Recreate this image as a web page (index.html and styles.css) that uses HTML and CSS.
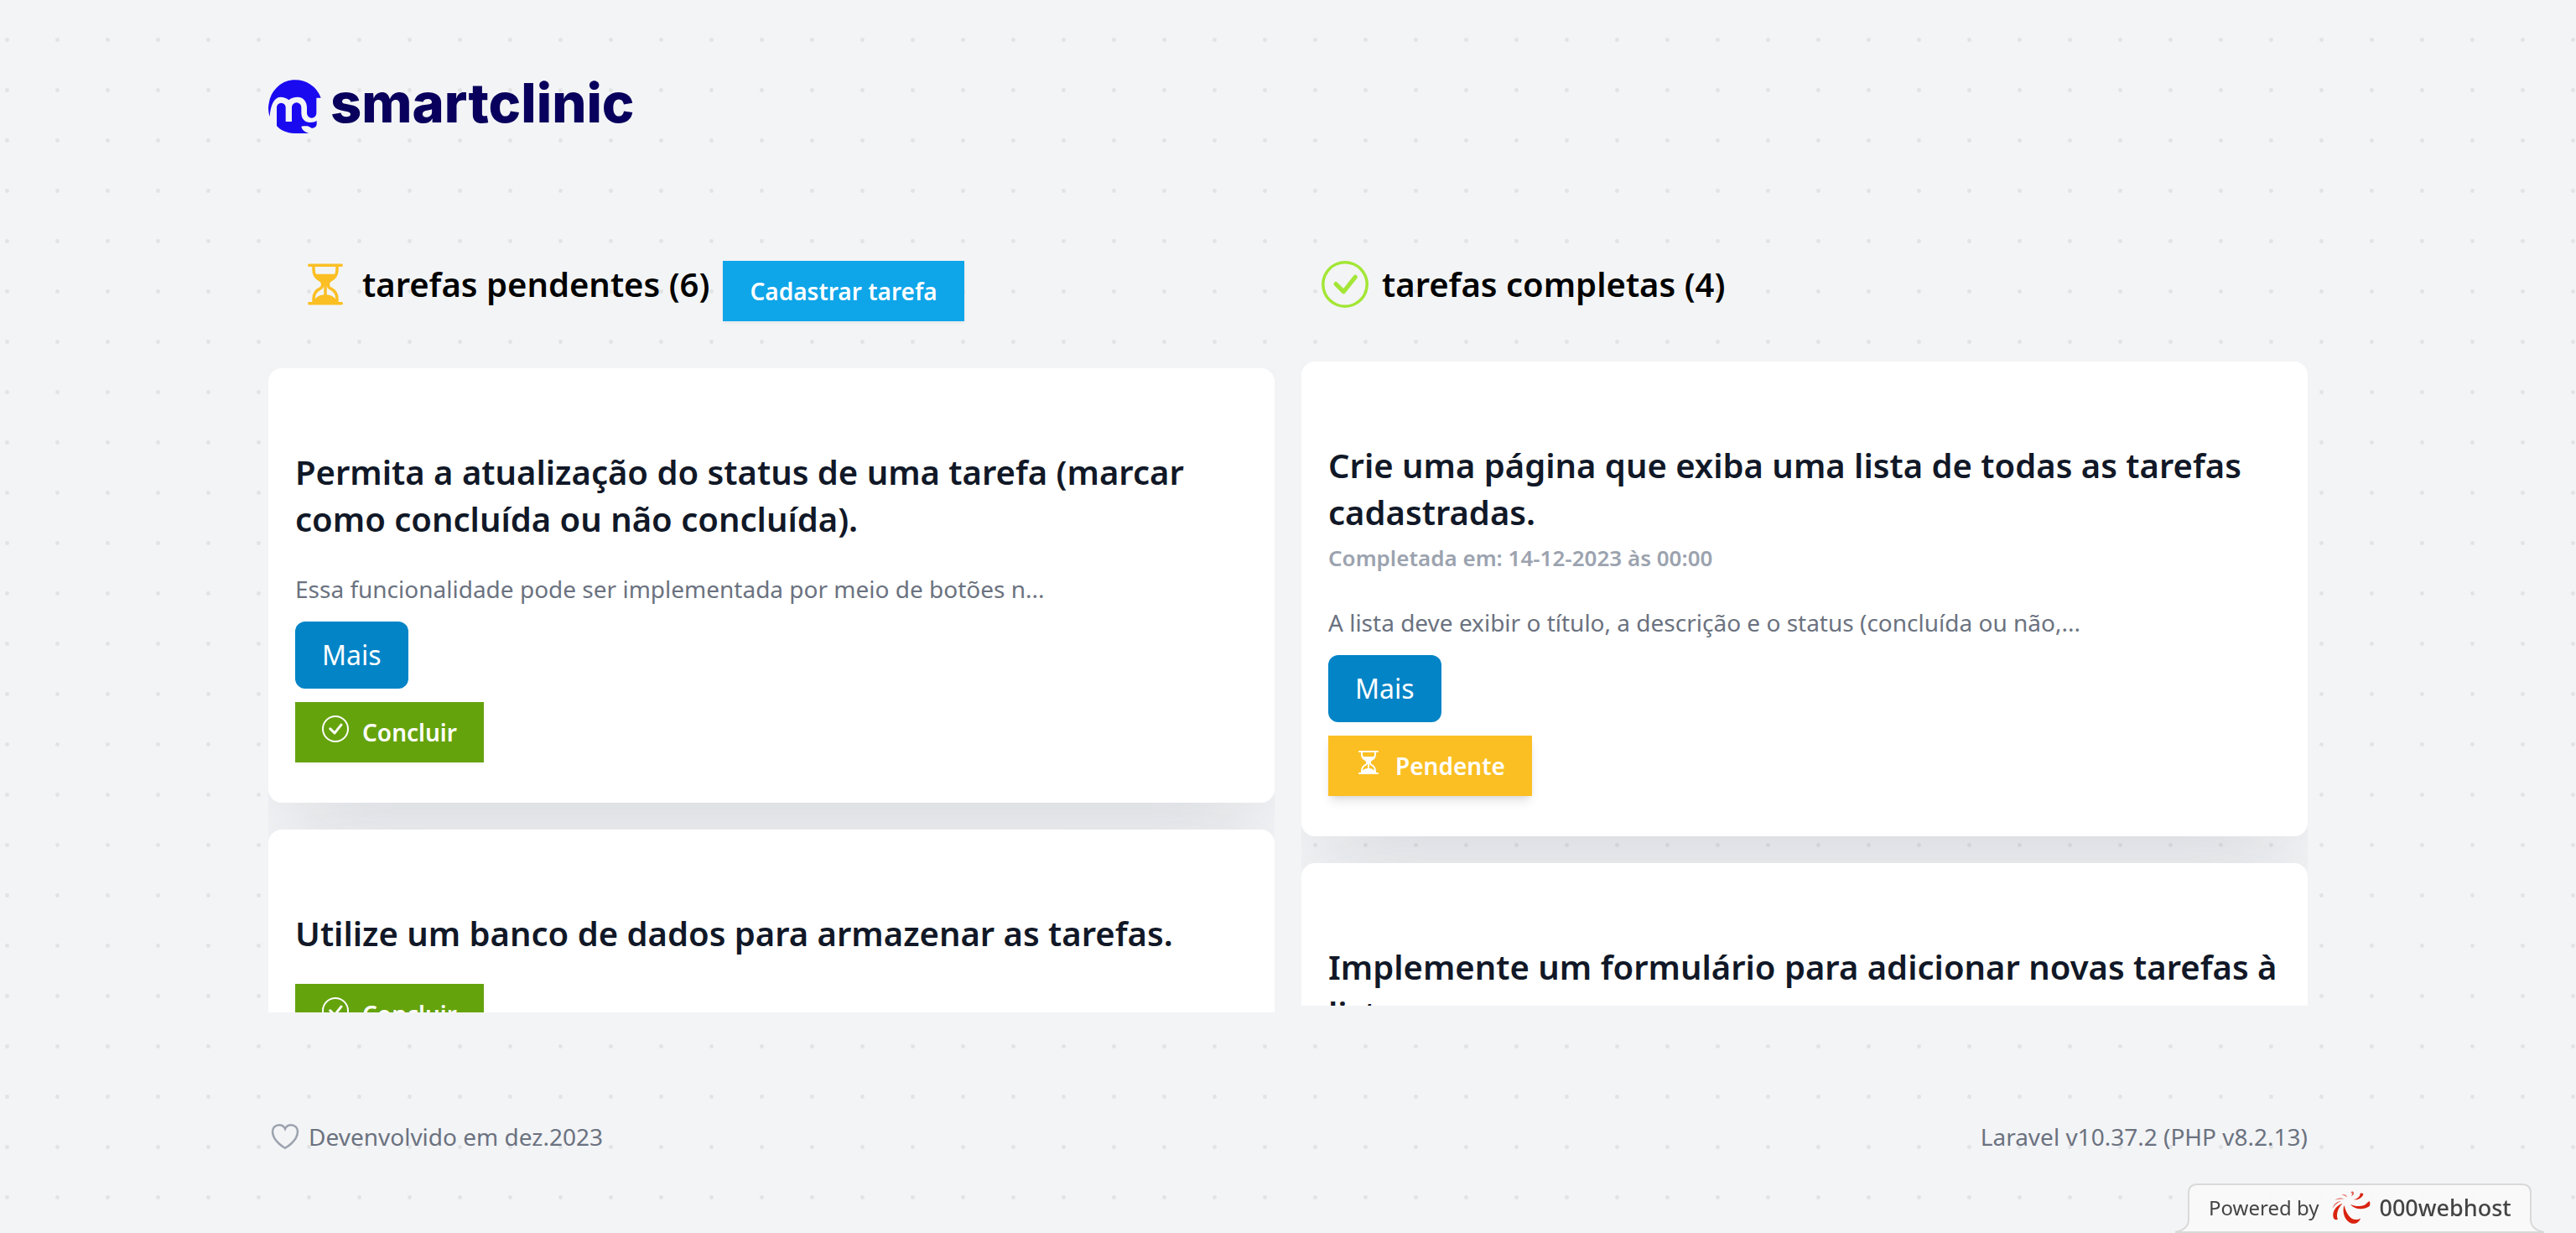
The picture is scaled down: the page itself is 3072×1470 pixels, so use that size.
FILE: index.html
```html
<!DOCTYPE html>
<html lang="pt-BR">
<head>
<meta charset="utf-8">
<meta name="viewport" content="width=device-width, initial-scale=1">
<title>smartclinic</title>
<link rel="stylesheet" href="styles.css">
</head>
<body>
<svg class="sprite" aria-hidden="true">
  <symbol id="hourglass" viewBox="0 0 16 16">
    <path d="M2.5 15a.5.5 0 1 1 0-1h1v-1a4.500 4.500 0 0 1 2.557-4.060c.29-.139.443-.377.443-.59v-.7c0-.213-.154-.451-.443-.59A4.500 4.500 0 0 1 3.500 3V2h-1a.5.5 0 0 1 0-1h11a.5.5 0 0 1 0 1h-1v1a4.500 4.500 0 0 1-2.557 4.060c-.29.139-.443.377-.443.59v.7c0 .213.154.451.443.59A4.500 4.500 0 0 1 12.500 13v1h1a.5.5 0 0 1 0 1zm2-13v1c0 .537.12 1.045.337 1.500h6.326c.216-.455.337-.963.337-1.500V2zm3 6.350c0 .701-.478 1.236-1.011 1.492A3.500 3.500 0 0 0 4.500 13s.866-1.299 3-1.480zm1 0v3.170c2.134.181 3 1.480 3 1.480a3.500 3.500 0 0 0-1.989-3.158C8.978 9.586 8.500 9.052 8.500 8.351z"/>
  </symbol>
  <symbol id="check" viewBox="0 0 16 16">
    <path d="M8 15A7 7 0 1 1 8 1a7 7 0 0 1 0 14m0 1A8 8 0 1 0 8 0a8 8 0 0 0 0 16"/>
    <path d="M10.970 4.970l-.02.022-3.473 4.425-2.093-2.094a.75.75 0 0 0-1.060 1.060L6.970 11.030a.75.75 0 0 0 1.079-.02l3.992-4.990a.75.75 0 0 0-1.071-1.050"/>
  </symbol>
</svg>
<div class="page">
  <header class="brand">
    <svg class="brand-mark" viewBox="0 0 192 192" aria-hidden="true">
      <path d="M5 132C-2 110 0 95 2 85A96 96 0 0 1 188 65H172V120a17 17 0 0 1-34 0V100C138 75 122 62 105 62C92 62 80 66 73 73C66 66 55 62 43 62C20 64 8 90 5 132Z"/>
      <path d="M30 99a16 16 0 0 1 32 0V150H84V99a17 17 0 0 1 34 0V118C118 140 130 153 150 153C160 153 168 150 173 147V160C171 175 155 175 150 170C145 166 138 164 118 167C120 180 132 188 146 192H95C65 191 42 180 30 165Z"/>
    </svg>
    <span class="brand-name">smartclinic</span>
  </header>

  <main class="board">
    <section class="column">
      <div class="column-head column-head-pending">
        <svg class="head-icon icon-amber" aria-hidden="true"><use href="#hourglass"/></svg>
        <h1 class="title">tarefas pendentes (6)</h1>
        <button class="btn btn-sky" type="button">Cadastrar tarefa</button>
      </div>
      <div class="list">
        <article class="card">
          <h2 class="card-title">Permita a atualização do status de uma tarefa (marcar como concluída ou não concluída).</h2>
          <p class="card-text">Essa funcionalidade pode ser implementada por meio de botões n...</p>
          <button class="btn-more" type="button">Mais</button>
          <button class="btn btn-lime" type="button"><svg class="btn-icon" aria-hidden="true"><use href="#check"/></svg>Concluir</button>
        </article>
        <article class="card">
          <h2 class="card-title">Utilize um banco de dados para armazenar as tarefas.</h2>
          <button class="btn btn-lime btn-solo" type="button"><svg class="btn-icon" aria-hidden="true"><use href="#check"/></svg>Concluir</button>
        </article>
      </div>
    </section>

    <section class="column">
      <div class="column-head column-head-done">
        <svg class="head-icon icon-lime" aria-hidden="true"><use href="#check"/></svg>
        <h1 class="title">tarefas completas (4)</h1>
      </div>
      <div class="list">
        <article class="card">
          <h2 class="card-title">Crie uma página que exiba uma lista de todas as tarefas cadastradas.</h2>
          <p class="card-date"><small>Completada em: 14-12-2023 às 00:00</small></p>
          <p class="card-text">A lista deve exibir o título, a descrição e o status (concluída ou não,...</p>
          <button class="btn-more" type="button">Mais</button>
          <button class="btn btn-amber" type="button"><svg class="btn-icon" aria-hidden="true"><use href="#hourglass"/></svg>Pendente</button>
        </article>
        <article class="card">
          <h2 class="card-title">Implemente um formulário para adicionar novas tarefas à lista.</h2>
          <button class="btn btn-amber btn-solo" type="button"><svg class="btn-icon" aria-hidden="true"><use href="#hourglass"/></svg>Pendente</button>
        </article>
      </div>
    </section>
  </main>

  <footer class="footer">
    <div class="credit">
      <svg class="heart" viewBox="0 0 24 24" aria-hidden="true"><path d="M21 8.250c0-2.485-2.099-4.500-4.688-4.500-1.935 0-3.597 1.126-4.312 2.733-.715-1.607-2.377-2.733-4.313-2.733C5.100 3.750 3 5.765 3 8.250c0 7.220 9 12 9 12s9-4.780 9-12z"/></svg>
      <span>Devenvolvido em dez.2023</span>
    </div>
    <div>Laravel v10.37.2 (PHP v8.2.13)</div>
  </footer>
</div>

<a class="host" href="#">
  <svg class="host-shape" viewBox="0 0 440 60" aria-hidden="true">
    <path d="M0 59C10 57 16 53 16 44V12Q16 2 27 2H413Q424 2 424 12V44C424 53 430 57 440 59Z"/>
  </svg>
  <span class="host-by">Powered by</span>
  <svg class="host-logo" viewBox="0 0 140 120" aria-hidden="true">
    <path d="M44 50C36 75 46 108 70 116C84 120 98 114 104 98C90 106 72 104 62 90C52 77 48 64 44 50Z"/>
    <path d="M66 48C84 66 112 70 136 54C139 48 139 42 136 36C127 41 124 48 116 51C100 57 82 54 66 48Z"/>
    <path d="M38 44C14 52-2 76 6 98C10 104 16 104 21 102C14 86 20 62 38 44Z"/>
    <path d="M78 30C90 32 108 28 114 10C111 6 106 6 102 8C103 18 92 28 78 30Z"/>
    <path d="M34 36C20 36 6 46 2 62C10 50 20 42 34 36Z" opacity=".7"/>
    <path d="M44 28C32 22 20 24 10 32C22 28 32 28 44 28Z" opacity=".6"/>
    <path d="M56 22C52 12 44 10 34 12C44 14 50 18 56 22ZM70 18C78 14 82 8 78 2C74 0 70 1 68 3C74 7 74 12 70 18Z" opacity=".7"/>
  </svg>
  <span class="host-name">000webhost</span>
</a>
</body>
</html>
```
FILE: styles.css
```css
*, *::before, *::after { box-sizing: border-box; }

body {
  margin: 0;
  font: 28px/40px "Noto Sans", sans-serif;
  color: #6b7280;
  background-color: #f3f4f6;
  background-image: url("data:image/svg+xml,%3Csvg xmlns='http://www.w3.org/2000/svg' width='60' height='60' viewBox='0 0 30 30'%3E%3Ccircle cx='1.227' cy='1.227' r='1.227' fill='%23000' fill-opacity='.07'/%3E%3C/svg%3E");
  background-position: center;
}

h1, h2, p { margin: 0; }
button { border: 0; font-family: inherit; cursor: pointer; }

.sprite { position: absolute; width: 0; height: 0; }

.page {
  max-width: 2560px;
  min-height: 100vh;
  margin: 0 auto;
  padding: 80px 64px;
  display: flex;
  flex-direction: column;
  justify-content: center;
}

/* Brand */
.brand {
  display: flex;
  align-items: flex-start;
  gap: 10px;
  height: 64px;
  margin-bottom: 152px;
}
.brand-mark { width: 64px; height: 64px; fill: #1a0af0; }
.brand-name { font: 800 65px/56px Inter, sans-serif; color: #08005c; }

/* Board */
.board { display: grid; grid-template-columns: 1fr 1fr; gap: 32px; align-items: start; }
.column { min-width: 0; }
.column-head { display: flex; align-items: flex-start; gap: 16px; }
.column-head-pending { padding-left: 40px; margin-bottom: 56px; }
.column-head-done { padding-left: 24px; margin-bottom: 64px; }
.head-icon { width: 56px; height: 56px; fill: currentColor; }
.icon-amber { color: #fbbf24; }
.icon-lime { color: #a3e635; }
.title { font-size: 40px; line-height: 56px; font-weight: 600; color: #000; }

.list {
  height: 768px;
  overflow-y: auto;
  scrollbar-width: none;
}

.card {
  display: flex;
  flex-direction: column;
  align-items: flex-start;
  padding: 96px 32px 48px;
  border-radius: 16px;
  background: #fff;
  box-shadow: 0 50px 100px -24px rgba(107, 114, 128, .2);
}
.card + .card { margin-top: 32px; }
.card-title { font-size: 40px; line-height: 56px; font-weight: 600; color: #111827; }
.card-date { font-size: 32px; line-height: 48px; font-weight: 600; color: #9ca3af; }
.card-date small { font-size: 26px; line-height: 32px; }
.card-text { margin: 32px 0 16px; line-height: 46px; }

.btn {
  display: inline-flex;
  align-items: flex-start;
  gap: 16px;
  padding: 16px 32px;
  font-size: 28px;
  line-height: 40px;
  font-weight: 600;
  color: #fff;
  box-shadow: 0 2px 4px rgba(0, 0, 0, .05);
}
.btn-icon { width: 32px; height: 32px; fill: currentColor; }
.btn-sky { background: #0ea5e9; }
.btn-lime { background: #65a30d; }
.btn-amber {
  background: #fbbf24;
  box-shadow: 0 8px 12px -2px rgba(0, 0, 0, .1), 0 4px 8px -4px rgba(0, 0, 0, .1);
}
.btn-solo { margin-top: 32px; }
.btn-more {
  margin-bottom: 16px;
  padding: 16px 32px;
  border-radius: 12px;
  font-size: 32px;
  line-height: 48px;
  color: #fff;
  background: #0284c7;
}

/* Footer */
.footer { display: flex; justify-content: space-between; margin-top: 128px; }
.credit { display: flex; align-items: center; gap: 8px; }
.heart { width: 40px; height: 40px; fill: none; stroke: #9ca3af; stroke-width: 1.5; }

/* Hosting badge pinned over the page corner */
.host {
  position: fixed;
  right: 38px;
  bottom: 0;
  display: flex;
  align-items: center;
  width: 440px;
  height: 60px;
  padding-left: 40px;
  color: #444;
  text-decoration: none;
  white-space: nowrap;
}
.host-shape {
  position: absolute;
  inset: 0;
  z-index: -1;
  fill: #fafafa;
  fill-opacity: .9;
  stroke: #d9d9d9;
  stroke-width: 2;
}
.host-by { font-size: 24px; }
.host-logo { width: 46px; height: 40px; margin: 0 10px 0 16px; fill: #d92310; }
.host-name { font-size: 27px; font-weight: 500; }
```
